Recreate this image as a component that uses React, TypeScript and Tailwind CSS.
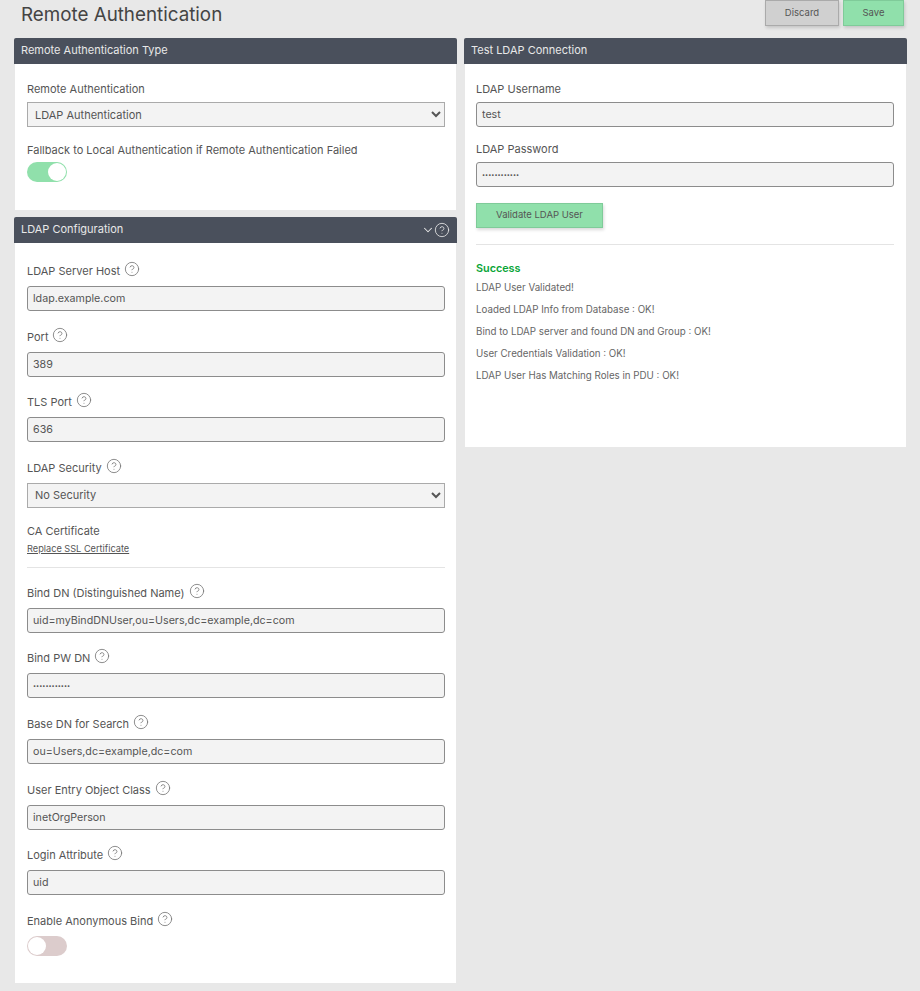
import { ChevronDown, CircleHelp } from "lucide-react";

function Help() {
    return <CircleHelp className="-mt-[3px] ml-[4px] h-[16px] w-[16px] text-[#777]" strokeWidth={1.25} />;
}

function Header({ title, extra }: { title: string; extra?: boolean }) {
    return (
        <div className="flex h-[26px] items-center justify-between rounded-t-[2px] bg-[#4a505c] pb-[1px] pl-[7px] pr-[7.5px] text-[11px] text-[#e8e8e8]">
            <span>{title}</span>
            {extra && (
                <span className="flex items-center">
                    <ChevronDown className="-mr-[1px] h-[14px] w-[14px]" strokeWidth={1.75} />
                    <CircleHelp className="h-[16px] w-[16px]" strokeWidth={1.25} />
                </span>
            )}
        </div>
    );
}

function Field({ label, value, help, password, compact }: { label: string; value: string; help?: boolean; password?: boolean; compact?: boolean }) {
    return (
        <div className={compact ? "mb-[14px]" : "mb-[17.6px]"}>
            <label className={`flex items-start pt-[1px] text-[11px] leading-[15px] text-[#555] ${compact ? "h-[21px]" : "h-[23px]"}`}>
                {label}
                {help && <Help />}
            </label>
            <input
                readOnly
                type={password ? "password" : "text"}
                value={value}
                className={`block h-[25px] w-full rounded-[3px] border border-[#8c8c8c] bg-[#f3f3f3] px-[5px] text-[#555] outline-none ${password ? "text-[5.5px]" : "text-[10.7px]"}`}
            />
        </div>
    );
}

function Picker({ value }: { value: string }) {
    return (
        <select
            defaultValue={value}
            className="block h-[25px] w-full border border-[#aaa] bg-[#f3f3f3] px-[3px] text-[11px] text-[#555] outline-none"
        >
            <option>{value}</option>
        </select>
    );
}

function Toggle({ on }: { on?: boolean }) {
    return (
        <div className={`flex h-[20px] w-[40px] items-center rounded-full p-[1px] ${on ? "justify-end bg-[#90e0ab]" : "justify-start bg-[#dccccc]"}`}>
            <div className="h-[18px] w-[18px] rounded-full bg-white" />
        </div>
    );
}

function Action({ children, green, className }: { children: string; green?: boolean; className: string }) {
    return (
        <button className={`border text-[9.5px] text-[#555] shadow-[1px_2px_3px_rgba(0,0,0,0.15)] ${green ? "border-[#7fcb99] bg-[#90e0ab]" : "border-[#aaa] bg-[#d0d0d0]"} ${className}`}>
            {children}
        </button>
    );
}

export default function App() {
    const results = [
        "LDAP User Validated!",
        "Loaded LDAP Info from Database : OK!",
        "Bind to LDAP server and found DN and Group : OK!",
        "User Credentials Validation : OK!",
        "LDAP User Has Matching Roles in PDU : OK!",
    ];

    return (
        <div className="h-[991px] overflow-hidden bg-[#e8e8e8] font-['Inter',sans-serif]">
            <div className="flex h-[38px] items-start justify-between pl-[21px] pr-[16px]">
                <h1 className="mt-[4px] text-[18.8px] leading-[22px] text-[#444]">Remote Authentication</h1>
                <div className="flex gap-[4px]">
                    <Action className="h-[26px] w-[74px]">Discard</Action>
                    <Action green className="h-[26px] w-[61px]">Save</Action>
                </div>
            </div>

            <div className="flex items-start gap-[7px] pl-[14px]">
                <div className="w-[443px]">
                    <section>
                        <Header title="Remote Authentication Type" />
                        <div className="mx-[1px] h-[146px] bg-white pl-[12px] pr-[11px] pt-[17px]">
                            <label className="block h-[21px] pt-[1px] text-[11px] leading-[15px] text-[#555]">Remote Authentication</label>
                            <Picker value="LDAP Authentication" />
                            <label className="mt-[15px] block h-[20px] pt-[1px] text-[11px] leading-[15px] text-[#555]">Fallback to Local Authentication if Remote Authentication Failed</label>
                            <Toggle on />
                        </div>
                    </section>

                    <section className="mt-[7px]">
                        <Header title="LDAP Configuration" extra />
                        <div className="mx-[1px] h-[740px] bg-white pl-[12px] pr-[11px] pt-[20px]">
                            <Field label="LDAP Server Host" value="ldap.example.com" help />
                            <Field label="Port" value="389" help />
                            <Field label="TLS Port" value="636" help />
                            <label className="flex h-[23px] items-start pt-[1px] text-[11px] leading-[15px] text-[#555]">
                                LDAP Security
                                <Help />
                            </label>
                            <Picker value="No Security" />
                            <div className="mt-[14.5px] h-[20.5px] pt-[1.5px] text-[11px] leading-[15px] text-[#555]">CA Certificate</div>
                            <a className="block text-[9.2px] leading-[12px] text-[#555] underline">Replace SSL Certificate</a>
                            <hr className="mb-[17px] mt-[12px] border-[#e4e4e4]" />
                            <Field label="Bind DN (Distinguished Name)" value="uid=myBindDNUser,ou=Users,dc=example,dc=com" help />
                            <Field label="Bind PW DN" value="abcdefghijkl" help password />
                            <Field label="Base DN for Search" value="ou=Users,dc=example,dc=com" help />
                            <Field label="User Entry Object Class" value="inetOrgPerson" help />
                            <Field label="Login Attribute" value="uid" help />
                            <label className="flex h-[23px] items-start pt-[1px] text-[11px] leading-[15px] text-[#555]">
                                Enable Anonymous Bind
                                <Help />
                            </label>
                            <Toggle />
                        </div>
                    </section>
                </div>

                <section className="w-[443px]">
                    <Header title="Test LDAP Connection" />
                    <div className="mx-[1px] h-[383px] bg-white pl-[11px] pr-[12px] pt-[17px]">
                        <Field label="LDAP Username" value="test" compact />
                        <Field label="LDAP Password" value="abcdefghijkl" password compact />
                        <Action green className="mt-[16px] block h-[25px] w-[127px]">Validate LDAP User</Action>
                        <hr className="mb-[17px] mt-[16px] border-[#e4e4e4]" />
                        <h2 className="mb-[5px] text-[10.8px] font-semibold leading-[14px] text-[#0aa538]">Success</h2>
                        {results.map((r) => (
                            <p key={r} className="mb-[8px] text-[9.75px] leading-[14px] text-[#666]">{r}</p>
                        ))}
                    </div>
                </section>
            </div>
        </div>
    );
}
